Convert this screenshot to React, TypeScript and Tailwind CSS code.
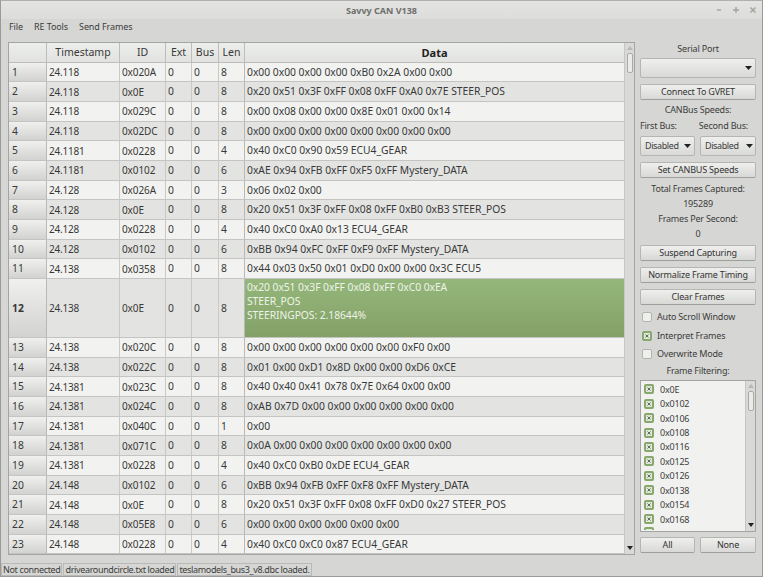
import React from "react";

const rows: [string, string, string, string, string][] = [
  ["1", "24.118", "0x020A", "8", "0x00 0x00 0x00 0x00 0xB0 0x2A 0x00 0x00"],
  ["2", "24.118", "0x0E", "8", "0x20 0x51 0x3F 0xFF 0x08 0xFF 0xA0 0x7E STEER_POS"],
  ["3", "24.118", "0x029C", "8", "0x00 0x08 0x00 0x00 0x8E 0x01 0x00 0x14"],
  ["4", "24.118", "0x02DC", "8", "0x00 0x00 0x00 0x00 0x00 0x00 0x00 0x00"],
  ["5", "24.1181", "0x0228", "4", "0x40 0xC0 0x90 0x59 ECU4_GEAR"],
  ["6", "24.1181", "0x0102", "6", "0xAE 0x94 0xFB 0xFF 0xF5 0xFF Mystery_DATA"],
  ["7", "24.128", "0x026A", "3", "0x06 0x02 0x00"],
  ["8", "24.128", "0x0E", "8", "0x20 0x51 0x3F 0xFF 0x08 0xFF 0xB0 0xB3 STEER_POS"],
  ["9", "24.128", "0x0228", "4", "0x40 0xC0 0xA0 0x13 ECU4_GEAR"],
  ["10", "24.128", "0x0102", "6", "0xBB 0x94 0xFC 0xFF 0xF9 0xFF Mystery_DATA"],
  ["11", "24.138", "0x0358", "8", "0x44 0x03 0x50 0x01 0xD0 0x00 0x00 0x3C ECU5"],
  ["12", "24.138", "0x0E", "8", ""],
  ["13", "24.138", "0x020C", "8", "0x00 0x00 0x00 0x00 0x00 0x00 0xF0 0x00"],
  ["14", "24.138", "0x022C", "8", "0x01 0x00 0xD1 0x8D 0x00 0x00 0xD6 0xCE"],
  ["15", "24.1381", "0x023C", "8", "0x40 0x40 0x41 0x78 0x7E 0x64 0x00 0x00"],
  ["16", "24.1381", "0x024C", "8", "0xAB 0x7D 0x00 0x00 0x00 0x00 0x00 0x00"],
  ["17", "24.1381", "0x040C", "1", "0x00"],
  ["18", "24.1381", "0x071C", "8", "0x0A 0x00 0x00 0x00 0x00 0x00 0x00 0x00"],
  ["19", "24.1381", "0x0228", "4", "0x40 0xC0 0xB0 0xDE ECU4_GEAR"],
  ["20", "24.148", "0x0102", "6", "0xBB 0x94 0xFB 0xFF 0xF8 0xFF Mystery_DATA"],
  ["21", "24.148", "0x0E", "8", "0x20 0x51 0x3F 0xFF 0x08 0xFF 0xD0 0x27 STEER_POS"],
  ["22", "24.148", "0x05E8", "6", "0x00 0x00 0x00 0x00 0x00 0x00"],
  ["23", "24.148", "0x0228", "4", "0x40 0xC0 0xC0 0x87 ECU4_GEAR"],
];

const filters = ["0x0E", "0x0102", "0x0106", "0x0108", "0x0116", "0x0125", "0x0126", "0x0138", "0x0154", "0x0168"];

const Arrow = () => (
  <svg width="7" height="4" viewBox="0 0 7 4" className="shrink-0"><path d="M0 0H7L3.5 4Z" fill="#222" /></svg>
);

const Check = ({ on }: { on: boolean }) =>
  on ? (
    <span className="w-[10px] h-[10px] shrink-0 rounded-[2px] bg-[#86a86c] flex items-center justify-center">
      <span className="w-[6px] h-[6px] bg-[#e2e7dc] flex items-center justify-center">
        <svg width="4" height="4" viewBox="0 0 4 4"><path d="M0.5 0.5L3.5 3.5M3.5 0.5L0.5 3.5" stroke="#5f6f52" strokeWidth="1" /></svg>
      </span>
    </span>
  ) : (
    <span className="w-[10px] h-[10px] shrink-0 rounded-[2px] bg-[#eef0ec] border border-[#b2b4af]" />
  );

const Btn = ({ children, className = "" }: { children: React.ReactNode; className?: string }) => (
  <div className={`h-4 flex items-center justify-center rounded-[2px] border border-[#b4b6b1] border-b-[#9d9f9a] bg-gradient-to-b from-[#eff0ee] to-[#d8d9d6] text-[#333] ${className}`}>
    {children}
  </div>
);

const Label = ({ children, className = "" }: { children: React.ReactNode; className?: string }) => (
  <div className={`h-[15px] flex items-center justify-center leading-none text-[#3c3c3c] ${className}`}>{children}</div>
);

const Scroll = () => (
  <div className="w-[10px] shrink-0 bg-[#d9dad7] border-l border-[#c6c7c4] flex flex-col items-center justify-between">
    <div className="flex flex-col items-center w-full">
      <svg width="6" height="4" viewBox="0 0 6 4" className="mt-[3px]"><path d="M0 4H6L3 0Z" fill="#b6b8b3" /></svg>
      <div className="w-[6px] h-[20px] mt-[3px] rounded-[2px] border border-[#a9aba6] bg-[#ebecea]" />
    </div>
    <div className="mb-[4px]"><svg width="6" height="4" viewBox="0 0 6 4" className="block"><path d="M0 0H6L3 4Z" fill="#222" /></svg></div>
  </div>
);

export default function App() {
  return (
    <div
      className="w-[763px] h-[577px] overflow-hidden flex flex-col bg-[#d6d7d4] text-[#333] text-[10px] border border-[#9a9b98] border-t-[#b0b1ae]"
      style={{ fontFamily: '"Noto Sans", sans-serif' }}
    >
      <div className="h-[18px] shrink-0 relative flex items-center justify-center bg-gradient-to-b from-[#e4e5e3] to-[#dcddda] text-[9px] font-bold text-[#6e6f6c] leading-none">
        Savvy CAN V138
        <div className="absolute right-[5px] top-0 h-full flex items-center gap-[9px] text-[#a3a5a1]">
          <svg width="8" height="8" viewBox="0 0 8 8"><path d="M2 4H6" stroke="currentColor" strokeWidth="1.4" /></svg>
          <svg width="8" height="8" viewBox="0 0 8 8"><path d="M1 4H7M4 1V7" stroke="currentColor" strokeWidth="1.4" /></svg>
          <svg width="8" height="8" viewBox="0 0 8 8"><path d="M1.5 1.5L6.5 6.5M6.5 1.5L1.5 6.5" stroke="currentColor" strokeWidth="1.5" /></svg>
        </div>
      </div>
      <div className="h-[16px] mt-[-1px] shrink-0 flex items-center pl-2 gap-[11px] text-[9px] tracking-[-0.1px] leading-none text-[#3c3c3c]">
        <span>File</span><span>RE Tools</span><span>Send Frames</span>
      </div>
      <div className="flex-1 flex min-h-0 pt-[8px] pl-[7px]">
        <div className="w-[627px] h-[513px] shrink-0 flex border border-[#a4a5a2] text-[#383838] text-[10.3px] leading-none">
          <div className="flex-1 flex flex-col min-w-0">
            <div className="h-[19.5px] shrink-0 flex bg-gradient-to-b from-[#eceeeb] to-[#e2e3e0] border-b border-[#bdbebb] text-[10.5px]">
              <div className="w-[38px] shrink-0 border-r border-[#bdbebb]" />
              <div className="w-[73px] shrink-0 flex items-center justify-center border-r border-[#bdbebb]">Timestamp</div>
              <div className="w-[46px] shrink-0 flex items-center justify-center border-r border-[#bdbebb]">ID</div>
              <div className="w-[26px] shrink-0 flex items-center justify-center border-r border-[#bdbebb]">Ext</div>
              <div className="w-[27px] shrink-0 flex items-center justify-center border-r border-[#bdbebb]">Bus</div>
              <div className="w-[26px] shrink-0 flex items-center justify-center border-r border-[#bdbebb]">Len</div>
              <div className="flex-1 flex items-center justify-center font-bold text-[11px] text-[#222]">Data</div>
            </div>
            {rows.map((r) => {
              const sel = r[0] === "12";
              const dark = Number(r[0]) % 2 === 0;
              return (
                <div
                  key={r[0]}
                  className={`${sel ? "h-[59px]" : "h-[19.68px]"} shrink-0 flex border-b border-[#c4c5c2] ${dark ? "bg-[#e3e4e2]" : "bg-[#f2f3f1]"}`}
                >
                  <div className={`w-[38px] shrink-0 flex items-center pl-[3px] bg-gradient-to-b from-[#f0f1ef] to-[#d2d3d0] border-r border-[#b9bab7] ${sel ? "font-bold" : ""}`}>{r[0]}</div>
                  <div className="w-[73px] shrink-0 flex items-center pl-[2px] text-[10px] tracking-[-0.2px] border-r border-[#c9cac7]">{r[1]}</div>
                  <div className="w-[46px] shrink-0 flex items-center pl-[2px] text-[10px] tracking-[-0.1px] border-r border-[#c9cac7]">{r[2]}</div>
                  <div className="w-[26px] shrink-0 flex items-center pl-[2px] border-r border-[#c9cac7]">0</div>
                  <div className="w-[27px] shrink-0 flex items-center pl-[2px] border-r border-[#c9cac7]">0</div>
                  <div className="w-[26px] shrink-0 flex items-center pl-[2px] border-r border-[#b9bab7]">{r[3]}</div>
                  {sel ? (
                    <div className="flex-1 min-w-0 pl-[2px] pt-[1px] bg-gradient-to-b from-[#95b77b] to-[#83a167] text-[#eef3e9] leading-[14px] tracking-[-0.05px]">
                      <div>0x20 0x51 0x3F 0xFF 0x08 0xFF 0xC0 0xEA</div>
                      <div>STEER_POS</div>
                      <div>STEERINGPOS: 2.18644%</div>
                    </div>
                  ) : (
                    <div className="flex-1 min-w-0 flex items-center pl-[2px] whitespace-nowrap">{r[4]}</div>
                  )}
                </div>
              );
            })}
          </div>
          <Scroll />
        </div>
        <div className="w-[116px] ml-[5px] shrink-0 flex flex-col text-[9px] tracking-[-0.2px] text-[#3c3c3c]">
          <Label className="mt-[-1px]">Serial Port</Label>
          <div className="mt-[2px] h-[20px] flex items-center justify-end pr-[3px] rounded-[2px] border border-[#b4b6b1] bg-gradient-to-b from-[#eff0ee] to-[#d9dad7]"><Arrow /></div>
          <Btn className="mt-[6px]">Connect To GVRET</Btn>
          <Label className="mt-[2px]">CANBus Speeds:</Label>
          <div className="flex justify-between pr-[8px] h-[16px] items-center leading-none"><span>First Bus:</span><span>Second Bus:</span></div>
          <div className="flex gap-[5px] mt-[3px]">
            <div className="w-[55px] h-[20px] flex items-center justify-between pl-[4px] pr-[3px] tracking-[-0.4px] rounded-[2px] border border-[#b4b6b1] bg-gradient-to-b from-[#eff0ee] to-[#d9dad7]">Disabled <Arrow /></div>
            <div className="w-[56px] h-[20px] flex items-center justify-between pl-[4px] pr-[2px] tracking-[-0.4px] rounded-[2px] border border-[#b4b6b1] bg-gradient-to-b from-[#eff0ee] to-[#d9dad7]">Disabled <Arrow /></div>
          </div>
          <Btn className="mt-[6px]">Set CANBUS Speeds</Btn>
          <Label className="mt-[3px]">Total Frames Captured:</Label>
          <Label>195289</Label>
          <Label>Frames Per Second:</Label>
          <Label>0</Label>
          <Btn className="mt-[4px]">Suspend Capturing</Btn>
          <Btn className="mt-[6px]">Normalize Frame Timing</Btn>
          <Btn className="mt-[6px]">Clear Frames</Btn>
          <div className="mt-[3px] h-[18px] flex items-center gap-[5px] pl-[2px]"><Check on={false} />Auto Scroll Window</div>
          <div className="mt-[1px] h-[18px] flex items-center gap-[5px] pl-[2px]"><Check on />Interpret Frames</div>
          <div className="h-[18px] flex items-center gap-[5px] pl-[2px]"><Check on={false} />Overwrite Mode</div>
          <Label>Frame Filtering:</Label>
          <div className="mt-[2px] h-[152px] flex border border-[#a4a5a2] bg-[#f1f2f0] overflow-hidden">
            <div className="flex-1 flex flex-col pl-[3px] pt-[1px] overflow-hidden">
              {filters.map((f) => (
                <div key={f} className="h-[14.45px] shrink-0 flex items-center gap-[6px] leading-none"><Check on />{f}</div>
              ))}
              <div className="h-[3px] overflow-hidden mt-[1px] shrink-0"><Check on /></div>
            </div>
            <Scroll />
          </div>
          <div className="mt-[5px] flex gap-[5px]">
            <Btn className="w-[55px] h-[16px]">All</Btn>
            <Btn className="w-[56px] h-[16px]">None</Btn>
          </div>
        </div>
      </div>
      <div className="h-[15px] shrink-0 flex items-center gap-[1px] mb-[-1px] text-[9px] tracking-[-0.35px] leading-none text-[#3c3c3c]">
        <span className="h-[13px] flex items-center px-[1px] border border-[#f4f5f3] outline outline-[#b9bab7] outline-offset-[-1px]">Not connected</span>
        <span className="h-[13px] flex items-center px-[1px] border border-[#f4f5f3] outline outline-[#b9bab7] outline-offset-[-1px]">drivearoundcircle.txt loaded</span>
        <span className="h-[13px] flex items-center px-[1px] border border-[#f4f5f3] outline outline-[#b9bab7] outline-offset-[-1px]">teslamodels_bus3_v8.dbc loaded.</span>
      </div>
    </div>
  );
}
